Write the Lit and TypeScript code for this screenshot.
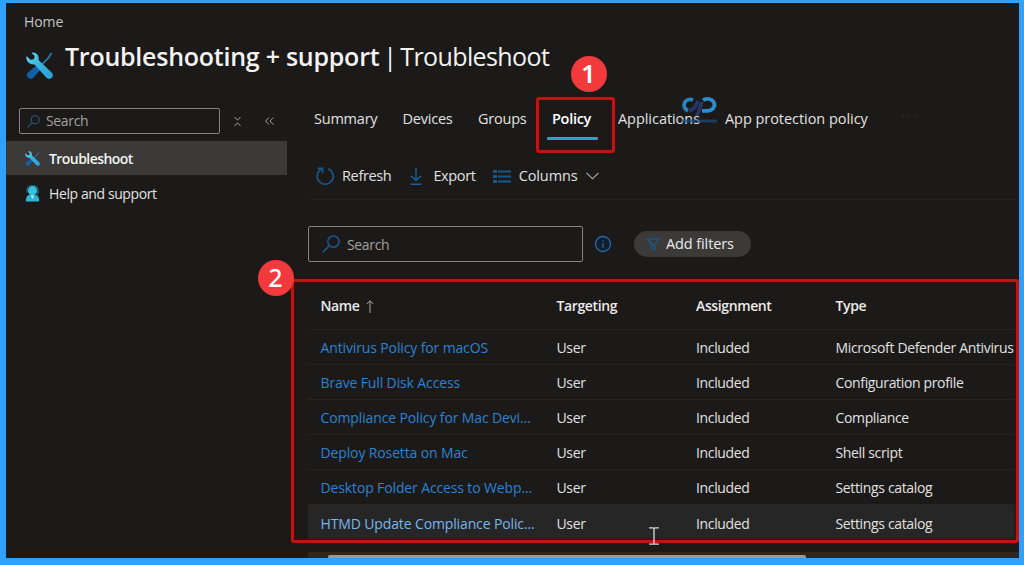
import { LitElement, html, css, svg } from "lit";
import { customElement } from "lit/decorators.js";
import { classMap } from "lit/directives/class-map.js";

interface PolicyRow {
  name: string;
  type: string;
  hovered?: boolean;
}

const rows: PolicyRow[] = [
  { name: "Antivirus Policy for macOS", type: "Microsoft Defender Antivirus" },
  { name: "Brave Full Disk Access", type: "Configuration profile" },
  { name: "Compliance Policy for Mac Devi...", type: "Compliance" },
  { name: "Deploy Rosetta on Mac", type: "Shell script" },
  { name: "Desktop Folder Access to Webp...", type: "Settings catalog" },
  { name: "HTMD Update Compliance Polic...", type: "Settings catalog", hovered: true },
];

const toolsIcon = (id: string) => svg`
  <svg class="tools" viewBox="0 0 28 28">
    <defs>
      <linearGradient id=${id} x1="0" y1="0" x2="1" y2="1">
        <stop offset="0" stop-color="#5fd6f3" />
        <stop offset="0.5" stop-color="#35b3e0" />
        <stop offset="1" stop-color="#2a9fd8" />
      </linearGradient>
    </defs>
    <path d="M26.6 1.2 25 3l-1 2.2-7.6 8" fill="none" stroke="#2783b5" stroke-width="1.7" />
    <path d="M10.4 14.2 15 18.4 7.6 26.6Q5 29 2.2 26.8-.4 24.4 1.6 21.8Z" fill="#1261a6" />
    <path d="M5.6.8Q10.2-.2 12.2 3.2 13.6 6 13 8.4L26.8 21.6Q29 24.4 26.8 26.8 24.2 29 21.2 26.8L8.6 12.8Q5.2 13.2 2.4 10.8-.4 8 .6 4.2L4.6 8 8.2 7.4 9 4.2Z" fill="url(#${id})" />
  </svg>`;

const personIcon = svg`
  <svg class="person" viewBox="0 0 16 18">
    <path d="M2 8V6.4Q2 .8 8 .8T14 6.4V8" fill="none" stroke="#1c6e8c" stroke-width="1.4" />
    <path d="M1 17.5Q.6 10.6 5 10.2H11Q15.4 10.6 15 17.5Z" fill="#2fb4d8" />
    <circle cx="8" cy="6" r="4.9" fill="#35c0dc" />
    <path d="M6 11H10L8 15Z" fill="#a8eef6" />
    <path d="M13.8 7.2V9.6L10.4 11.4" fill="none" stroke="#1c6e8c" />
  </svg>`;

const searchIcon = svg`
  <svg class="magnifier" viewBox="0 0 18 18" fill="none" stroke="currentColor" stroke-width="1.5">
    <circle cx="11.4" cy="6.6" r="5.6" />
    <path d="M7.4 10.6.8 17.2" />
  </svg>`;

@customElement("app-root")
export class AppRoot extends LitElement {
  static styles = css`
    :host {
      display: block;
      width: 1024px;
      height: 565px;
      box-sizing: border-box;
      position: relative;
      overflow: hidden;
      background: #1b1a19;
      border: solid #2fa1fb;
      border-width: 3px 5px 7px 6px;
      font-family: "Open Sans", "Noto Sans", sans-serif;
      font-size: 14px;
      line-height: 20px;
      letter-spacing: -0.35px;
      color: #e2e1e0;
      white-space: nowrap;
    }
    svg { display: block; flex: none; overflow: visible; }
    .crumb { padding: 9px 0 0 18px; height: 20px; letter-spacing: -0.1px; color: #c6c5c4; }
    .heading { display: flex; height: 60px; padding-left: 20px; }
    .heading .tools { width: 27px; height: 27px; margin-top: 20px; }
    h1 {
      margin: 7px 0 0 12px;
      font-size: 25px;
      line-height: 34px;
      font-weight: 400;
      letter-spacing: -0.6px;
      color: #f4f3f2;
    }
    h1 b { font-weight: 600; letter-spacing: -0.25px; }
    .divider { margin: 0 -2px; }
    .body { display: grid; grid-template-columns: 280.5px 1fr; height: 463px; }
    .side-search { display: flex; align-items: center; margin: 16px 0 0 13px; height: 26px; }
    .box {
      display: flex;
      align-items: center;
      box-sizing: border-box;
      border: 1px solid #858381;
      border-radius: 2px;
      color: #a3a19f;
    }
    .side-search .box { width: 201px; height: 26px; padding-left: 7px; gap: 6px; }
    .side-search .magnifier { width: 13px; height: 13px; color: #285b87; }
    .side-search .clear { width: 7px; height: 9px; margin-left: 14px; }
    .side-search .collapse { width: 9px; height: 8px; margin-left: 24px; }
    .item { display: flex; align-items: center; height: 34px; padding-left: 19px; gap: 9px; letter-spacing: -0.4px; }
    .item .tools { width: 15px; height: 15px; }
    .item .person { width: 15px; height: 17px; }
    .item.selected { margin-top: 7px; background: #3b3a39; font-weight: 600; letter-spacing: -0.55px; color: #f4f3f2; }
    .item span { margin-top: 1px; }
    .help { height: 36px; }
    main { padding-left: 21.5px; min-width: 0; }
    .tabs {
      display: grid;
      grid-template-columns: 88.5px 75.5px 68px 72px 107px auto;
      padding: 17px 0 0 6px;
      height: 44px;
      font-size: 14.5px;
      letter-spacing: -0.22px;
    }
    .tab.active { font-weight: 600; color: #fff; letter-spacing: -0.3px; }
    .tab.active span { margin-left: 6px; }
    .tab.active::after {
      content: "";
      display: block;
      width: 51px;
      height: 3px;
      margin: 8px 0 0 0.5px;
      border-radius: 1px;
      background: #2da3bd;
    }
    .commands {
      display: flex;
      align-items: center;
      height: 47px;
      padding-left: 8px;
      box-sizing: border-box;
      border-bottom: 1px solid #222120;
      font-size: 14.5px;
    }
    .refresh { width: 18px; height: 18px; margin-right: 8px; }
    .export { width: 12px; height: 17px; margin: 0 11px 0 19px; }
    .columns { width: 18px; height: 13px; margin: 0 8px 0 17px; }
    .tab.wide { letter-spacing: -0.05px; }
    .wide { letter-spacing: -0.1px; }
    .chevron { width: 13px; height: 8px; margin-left: 8px; }
    .filters { display: flex; align-items: center; margin-top: 26px; height: 35px; }
    .filters .box { width: 275px; height: 36px; padding-left: 13px; gap: 7px; }
    .filters .box span { padding-top: 2px; }
    .filters .magnifier { width: 18px; height: 18px; color: #1b5792; }
    .info { width: 16px; height: 16px; margin: 0 23px 0 12px; }
    .pill {
      display: flex;
      align-items: center;
      box-sizing: border-box;
      width: 117px;
      height: 26px;
      padding-left: 12px;
      gap: 6px;
      border-radius: 13px;
      background: #3b3a39;
      color: #eceae9;
      font-size: 14.5px;
      letter-spacing: -0.1px;
    }
    .pill svg { width: 14px; height: 12px; }
    .row {
      display: grid;
      grid-template-columns: 236px 139.5px 139.5px 1fr;
      align-items: center;
      box-sizing: border-box;
      height: 35px;
      padding: 2px 0 0 12.5px;
      border-bottom: 1px solid #252423;
    }
    .head { margin-top: 22px; height: 47px; padding-top: 0; font-weight: 600; letter-spacing: -0.38px; color: #eceae9; }
    .head > span:first-child { display: flex; align-items: center; gap: 6px; }
    .arrow { width: 8px; height: 13px; }
    .link { color: #2b82d3; letter-spacing: -0.13px; }
    .row.hovered { background: #262626; height: 37px; padding-bottom: 1px; border-bottom: 0; }
    .hovered .link { color: #76b6f0; }
    .scroll { height: 6px; margin-top: 10px; background: #292827; display: flex; align-items: flex-end; }
    .thumb { width: 478px; height: 3px; margin-left: 20px; border-radius: 2px 2px 0 0; background: #9a9998; }
    .mark { position: absolute; border: 3px solid #c01515; border-radius: 3px; box-sizing: border-box; box-shadow: 0 0 2px 1px #430c0c, inset 0 0 2px 1px #430c0c; }
    .mark.policy { left: 530px; top: 94px; width: 79px; height: 56px; }
    .mark.table { left: 285px; top: 276px; width: 728px; height: 264px; }
    .badge {
      position: absolute;
      width: 36px;
      height: 36px;
      border-radius: 50%;
      background: #f23a3d;
      color: #fff;
      font: 600 25px/34px "Noto Sans", sans-serif;
      letter-spacing: 0;
      text-align: center;
    }
    .badge.one { left: 564.5px; top: 52.5px; }
    .badge.two { left: 251.5px; top: 257px; font-weight: 500; }
    .watermark { position: absolute; left: 675px; top: 93px; width: 36px; height: 28px; }
    .cursor { position: absolute; left: 643px; top: 524px; width: 10px; height: 18px; }
    .more { position: absolute; left: 895px; top: 112px; width: 16px; height: 2px; }
  `;

  render() {
    return html`
      <div class="crumb">Home</div>
      <header class="heading">
        ${toolsIcon("tools-large")}
        <h1><b>Troubleshooting + support</b> <span class="divider">|</span> Troubleshoot</h1>
      </header>
      <div class="body">
        <nav>
          <div class="side-search">
            <div class="box">${searchIcon}<span>Search</span></div>
            <svg class="clear" viewBox="0 0 7 9" fill="none" stroke="#a19f9d"><path d="M.5 0 3.5 3.2 6.5 0M.5 9 3.5 5.8 6.5 9" /></svg>
            <svg class="collapse" viewBox="0 0 9 8" fill="none" stroke="#a19f9d"><path d="M4 .5.6 4 4 7.5M8.4.5 5 4 8.4 7.5" /></svg>
          </div>
          <div class="item selected">${toolsIcon("tools-small")}<span>Troubleshoot</span></div>
          <div class="item help">${personIcon}<span>Help and support</span></div>
        </nav>
        <main>
          <div class="tabs">
            <div class="tab">Summary</div>
            <div class="tab">Devices</div>
            <div class="tab">Groups</div>
            <div class="tab active"><span>Policy</span></div>
            <div class="tab wide">Applications</div>
            <div class="tab wide">App protection policy</div>
          </div>
          <div class="commands">
            <svg class="refresh" viewBox="0 0 18 18" fill="none" stroke="#17588f" stroke-width="1.6"><path d="M6.2 1.8A8 8 0 1 0 12.2 1.8M1.6 1.4H6.6V6" /></svg>
            <span>Refresh</span>
            <svg class="export" viewBox="0 0 12 17" fill="none" stroke="#17609f" stroke-width="1.4"><path d="M6 0V12.5M1 7.8 6 12.6 11 7.8M.5 16.2H11.5" /></svg>
            <span>Export</span>
            <svg class="columns" viewBox="0 0 18 13" fill="none" stroke="#17588f"><path d="M0 1.5H4M0 6.5H4M0 11.5H4" stroke-width="3" /><path d="M5 1.5H18M5 6.5H18M5 11.5H18" stroke-width="1.8" /></svg>
            <span class="wide">Columns</span>
            <svg class="chevron" viewBox="0 0 13 8" fill="none" stroke="#b5b3b1" stroke-width="1.1"><path d="M.5.8 6.5 6.8 12.5.8" /></svg>
          </div>
          <div class="filters">
            <div class="box">${searchIcon}<span>Search</span></div>
            <svg class="info" viewBox="0 0 16 16"><circle cx="8" cy="8" r="7.5" fill="#111f2d" stroke="#2468aa" stroke-width="1.3" /><path d="M8 4.2V5.4M8 7V11.8" stroke="#2468aa" stroke-width="1.3" /></svg>
            <div class="pill">
              <svg viewBox="0 0 14 12" fill="none" stroke="#1d5684" stroke-width="1.3"><path d="M.8.8H13.2L9 6V11.4H5.4V6ZM3.6 2.6 10 11" /></svg>
              <span>Add filters</span>
            </div>
          </div>
          <div class="row head">
            <span>Name<svg class="arrow" viewBox="0 0 8 13" fill="none" stroke="#a9a7a5"><path d="M4 13V.8M.8 4 4 .8 7.2 4" /></svg></span>
            <span>Targeting</span><span>Assignment</span><span>Type</span>
          </div>
          ${rows.map(
            (row) => html`
              <div class=${classMap({ row: true, hovered: !!row.hovered })}>
                <span class="link">${row.name}</span><span>User</span><span>Included</span><span>${row.type}</span>
              </div>
            `,
          )}
          <div class="scroll"><div class="thumb"></div></div>
        </main>
      </div>
      <svg class="watermark" viewBox="0 0 36 28" fill="none">
        <path d="M12 4A6.2 5.8 0 1 0 7 14.6" stroke="#2683bd" stroke-width="3.8" />
        <path d="M22 4.2A7 6 0 1 1 27 14.8H21" stroke="#2d8bc9" stroke-width="3.8" />
        <path d="M8 14.6Q13 14 15.4 8.6L17 5M16 20 21 6" stroke="#26366a" stroke-width="3.6" />
        <path d="M1 25H36" stroke="#1d4c80" stroke-width="2.8" opacity="0.7" />
      </svg>
      <svg class="more" viewBox="0 0 16 2"><path d="M1 1H3M7 1H9M13 1H15" stroke="#2a2928" stroke-width="1.4" /></svg>
      <div class="mark policy"></div>
      <div class="mark table"></div>
      <div class="badge one">1</div>
      <div class="badge two">2</div>
      <svg class="cursor" viewBox="0 0 10 18" fill="none" stroke="#d8d8d8" stroke-width="1.3"><path d="M0 .8H4L5 1.6 6 .8H10M5 1.6V16.4M0 17.2H4L5 16.4 6 17.2H10" /></svg>
    `;
  }
}
